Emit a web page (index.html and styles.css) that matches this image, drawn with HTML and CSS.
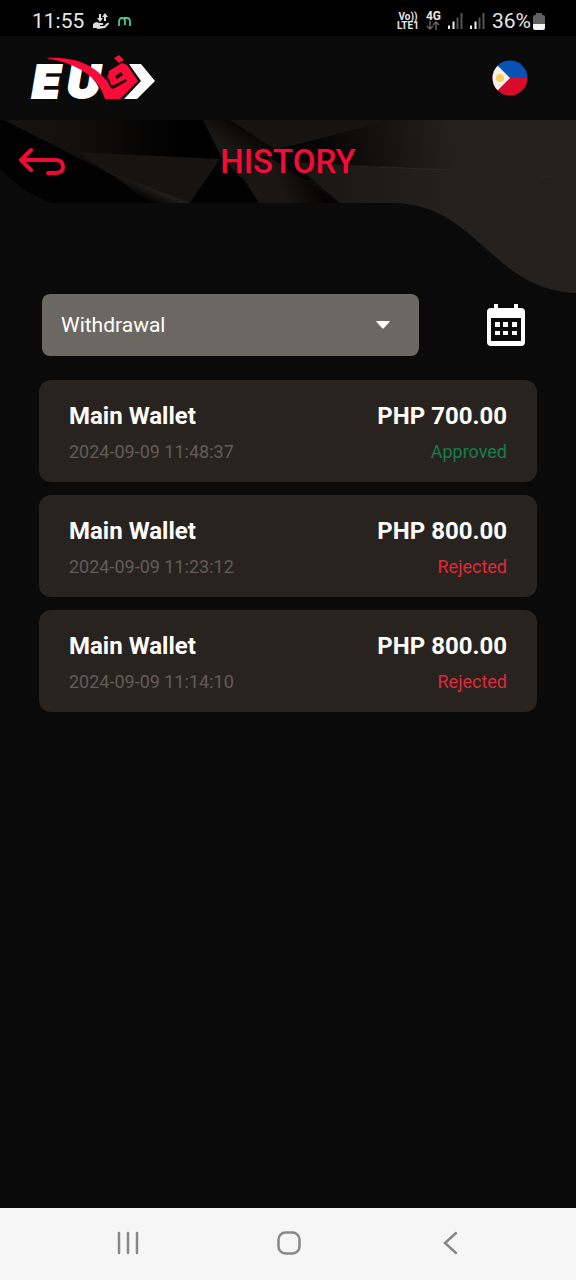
FILE: index.html
```html
<!DOCTYPE html>
<html lang="en">
<head>
<meta charset="utf-8">
<meta name="viewport" content="width=device-width, initial-scale=1">
<title>History</title>
<link rel="stylesheet" href="styles.css">
</head>
<body>
<div class="status">
  <div class="status-group">
    <span class="clock">11:55</span>
    <svg width="16" height="16" viewBox="0 0 16 16" aria-hidden="true">
      <path d="M0 11l3-2 4 1h2q2 0 1 2H7v1h4l3-3q2-1 2 1l-4 4-7 1-2-1H0z" fill="#ddd"/>
      <path d="M7 1v5M12 8V3" stroke="#ddd" stroke-width="2"/><path d="M4 5h6L7 9zM9 4h6l-3-4z" fill="#ddd"/>
    </svg>
    <svg width="13" height="9" viewBox="0 0 13 9" aria-hidden="true">
      <path d="M1 9V5q0-4 3-4t3 3v4M6 1h3q3 0 3 4v4" fill="none" stroke="#3fce91" stroke-width="1.800"/>
    </svg>
  </div>
  <div class="status-group status-right">
    <span class="volte"><span>Vo))</span><span>LTE1</span></span>
    <span class="network"><span>4G</span>
      <svg width="14" height="9" viewBox="0 0 14 9" aria-hidden="true"><path d="M4 0v8M1 5l3 3 3-3M10 9V1M7 4l3-3 3 3" fill="none" stroke="#666" stroke-width="1.400"/></svg>
    </span>
    <svg width="15" height="16" viewBox="0 0 15 16" aria-hidden="true"><path d="M1 12.500V16M5.500 8.500V16" stroke="#eee" stroke-width="2"/><path d="M9.500 4.500V16M13.500 0V16" stroke="#555" stroke-width="2"/></svg>
    <svg width="15" height="16" viewBox="0 0 15 16" aria-hidden="true"><path d="M1 12.500V16M5.500 8.500V16" stroke="#eee" stroke-width="2"/><path d="M9.500 4.500V16M13.500 0V16" stroke="#555" stroke-width="2"/></svg>
    <span class="battery">36%
      <svg width="12" height="17" viewBox="0 0 12 17" aria-hidden="true"><path d="M3 2V0h6v2h1q2 0 2 2v7H0V4q0-2 2-2z" fill="#606060"/><path d="M0 11h12v4q0 2-2 2H2q-2 0-2-2z" fill="#f4f4f4"/></svg>
    </span>
  </div>
</div>

<header class="header">
  <a class="brand" href="#" aria-label="EU home">
    <svg class="brand-logo" width="126" height="48" viewBox="0 0 126 48">
      <text class="brand-text" x="1" y="44">E</text>
      <text class="brand-text" x="36" y="44">U</text>
      <path d="M98 10h12l14 17-18 18H93l17-18z" fill="#fff"/>
      <path d="M43 9C58 16 69 28 73 45" fill="none" stroke="#0a0a0a" stroke-width="2"/>
      <path d="M15 4C42 2 66 10 80 33L89 45H74C69 27 53 11 15 4z" fill="#fb0b37"/>
      <path d="M77 22L78 17 91 9 96 11 107 27 89 45H75L73 34z" fill="#fb0b37"/>
      <path d="M84 22l6-4 2 3-6 4zM76 26l3 7q2 3 5 1l12-7-1-2-12 6q-2 1-3-1l-3-7z" fill="#16080c"/>
      <path d="M83 4l5-3 5 5-5 3z" fill="#fb0b37"/>
    </svg>
  </a>
  <button class="icon-button" type="button" aria-label="Country: Philippines">
    <svg width="36" height="36" viewBox="0 0 36 36">
      <defs><clipPath id="flag-round"><circle cx="18" cy="18" r="17.500"/></clipPath></defs>
      <g clip-path="url(#flag-round)"><path d="M0 0h36v18H0z" fill="#0752b5"/><path d="M0 18h36v18H0z" fill="#d80b2b"/><path d="M0 0L18 18 0 36z" fill="#f5f1e8"/><circle cx="8" cy="18" r="4" fill="#f4cf5b"/></g>
    </svg>
  </button>
</header>

<main class="main">
  <svg class="backdrop" viewBox="0 0 576 173" preserveAspectRatio="none" aria-hidden="true">
    <defs>
      <linearGradient id="facet-left" gradientUnits="userSpaceOnUse" x1="0" y1="0" x2="200" y2="0"><stop offset="0" stop-color="#151210"/><stop offset=".35" stop-color="#14100e"/><stop offset=".78" stop-color="#030303"/><stop offset="1" stop-color="#000"/></linearGradient>
      <linearGradient id="facet-right" gradientUnits="userSpaceOnUse" x1="310" y1="30" x2="450" y2="10"><stop offset="0" stop-color="#040404"/><stop offset=".5" stop-color="#14110f"/><stop offset="1" stop-color="#24201d"/></linearGradient>
      <linearGradient id="facet-fold" gradientUnits="userSpaceOnUse" x1="320" y1="68" x2="285" y2="82"><stop offset="0" stop-color="#050404"/><stop offset="1" stop-color="#1b1613"/></linearGradient>
      <linearGradient id="wave" gradientUnits="userSpaceOnUse" x1="300" y1="0" x2="450" y2="0"><stop offset="0" stop-color="#1a1613"/><stop offset="1" stop-color="#24201d"/></linearGradient>
      <linearGradient id="facet-shade" gradientUnits="userSpaceOnUse" x1="252" y1="14" x2="238" y2="34"><stop offset="0" stop-color="#080706"/><stop offset="1" stop-color="#1a1613"/></linearGradient>
      <linearGradient id="facet-glint" gradientUnits="userSpaceOnUse" x1="152" y1="67" x2="146" y2="80"><stop offset="0" stop-color="#25211d"/><stop offset="1" stop-color="#020202"/></linearGradient>
    </defs>
    <path d="M0 0h300v83H52Q18 70 0 48z" fill="#020202"/>
    <path d="M4 0h199l17 39-112 14z" fill="url(#facet-left)"/>
    <path d="M78 32l142 7-30 44-82-30z" fill="#171310"/>
    <path d="M108 52L190 83H150z" fill="url(#facet-glint)"/>
    <path d="M203 0h30l42 29-34 29-19-20z" fill="url(#facet-shade)"/>
    <path d="M230 0h162l-116 30z" fill="#171310"/>
    <path d="M392 0h184v60H300l-24-30z" fill="url(#facet-right)"/>
    <path d="M241 55l30-17 69 45h-81z" fill="url(#facet-fold)"/>
    <path d="M292 42L450 50H576V173C491 170 477 83 392 83H340z" fill="url(#wave)"/>
    <path d="M380 47L450 50M538 57h15" stroke="#2c2723" fill="none"/>
  </svg>
  <div class="titlebar">
    <button class="icon-button" type="button" aria-label="Back">
      <svg width="46" height="30" viewBox="0 0 46 30"><path d="M12 3L2 13l10 10M3 13h33q8 0 8 7 0 6-8 6h-7" fill="none" stroke="#f00b35" stroke-width="4" stroke-linecap="round" stroke-linejoin="round"/></svg>
    </button>
    <h1 class="title">HISTORY</h1>
  </div>
  <div class="filters">
    <div class="select-wrap">
      <select class="select" aria-label="Transaction type"><option>Withdrawal</option></select>
      <svg class="select-arrow" width="14" height="8" viewBox="0 0 14 8" aria-hidden="true"><path d="M1 0h12q1 0 .5 1L8 7Q7 8 6 7L.500 1Q0 0 1 0z" fill="#fff"/></svg>
    </div>
    <button class="icon-button" type="button" aria-label="Choose date">
      <svg width="38" height="42" viewBox="0 0 38 42"><path d="M7 0h4v4h16V0h4v4h3q4 0 4 4v30q0 4-4 4H4q-4 0-4-4V8q0-4 4-4h3zM4 14v23h30V14z" fill="#fff" fill-rule="evenodd"/><path d="M8 18h5v5H8zm8 0h5v5h-5zm9 0h5v5h-5zM8 27h5v4H8zm8 0h5v4h-5zm9 0h5v4h-5z" fill="#fff"/></svg>
    </button>
  </div>
  <ul class="records">
    <li class="card">
      <div class="row primary"><span>Main Wallet</span><span>PHP 700.00</span></div>
      <div class="row secondary"><time datetime="2024-09-09T11:48:37">2024-09-09 11:48:37</time><span class="approved">Approved</span></div>
    </li>
    <li class="card">
      <div class="row primary"><span>Main Wallet</span><span>PHP 800.00</span></div>
      <div class="row secondary"><time datetime="2024-09-09T11:23:12">2024-09-09 11:23:12</time><span class="rejected">Rejected</span></div>
    </li>
    <li class="card">
      <div class="row primary"><span>Main Wallet</span><span>PHP 800.00</span></div>
      <div class="row secondary"><time datetime="2024-09-09T11:14:10">2024-09-09 11:14:10</time><span class="rejected">Rejected</span></div>
    </li>
  </ul>
</main>

<nav class="system-nav" aria-label="System navigation">
  <button class="icon-button" type="button" aria-label="Recent apps"><svg width="24" height="24" viewBox="0 0 24 24"><path d="M3 2v20M12 2v20M21 2v20" stroke="#888" stroke-width="2.500" stroke-linecap="round"/></svg></button>
  <button class="icon-button" type="button" aria-label="Home"><svg width="24" height="24" viewBox="0 0 24 24"><rect x="1.500" y="1.500" width="21" height="21" rx="7" fill="none" stroke="#888" stroke-width="2.500"/></svg></button>
  <button class="icon-button" type="button" aria-label="Go back"><svg width="24" height="24" viewBox="0 0 24 24"><path d="M18 2L7 12l11 10" fill="none" stroke="#888" stroke-width="2.500" stroke-linecap="round"/></svg></button>
</nav>
</body>
</html>
```
FILE: styles.css
```css
* { box-sizing: border-box; }
body {
  margin: 0;
  min-height: 100vh;
  display: flex;
  flex-direction: column;
  background: #0a0a0a;
  color: #fff;
  font-family: Roboto, "Liberation Sans", sans-serif;
}
svg { display: block; }
.icon-button {
  display: flex;
  padding: 0;
  border: 0;
  background: none;
  cursor: pointer;
}
.status {
  display: flex;
  justify-content: space-between;
  align-items: center;
  height: 36px;
  padding: 6px 31px 0 32px;
  background: #000;
  color: #e6e6e6;
}
.status-group { display: flex; align-items: center; gap: 9px; }
.status-right { gap: 7px; }
.clock, .battery { font-size: 21px; line-height: 24px; }
.battery { display: flex; align-items: center; gap: 2px; }
.volte, .network {
  display: flex;
  flex-direction: column;
  align-items: center;
  font-size: 10px;
  font-weight: 700;
  line-height: 9px;
}
.network { font-size: 12px; }
.header {
  display: flex;
  justify-content: space-between;
  align-items: center;
  height: 84px;
  padding: 0 48px 0 31px;
}
.brand-logo { overflow: visible; }
.brand-text {
  font-family: Inter, sans-serif;
  font-size: 46px;
  font-weight: 900;
  font-style: italic;
  fill: #fff;
  stroke: #fff;
  stroke-width: 2px;
}
.main { position: relative; flex: 1; }
.backdrop {
  position: absolute;
  top: 0;
  left: 0;
  width: 100%;
  height: 173px;
}
.titlebar {
  position: relative;
  display: grid;
  grid-template-columns: 46px 1fr 46px;
  align-items: center;
  height: 84px;
  padding: 0 19px;
}
.title {
  margin: 0;
  text-align: center;
  color: #f50b37;
  font-size: 33px;
  font-weight: 500;
  line-height: 40px;
}
.filters {
  position: relative;
  display: flex;
  justify-content: space-between;
  align-items: center;
  margin-top: 90px;
  padding: 0 51px 0 42px;
}
.select-wrap { position: relative; flex: 0 1 377px; }
.select {
  appearance: none;
  display: block;
  width: 100%;
  height: 62px;
  padding: 0 48px 0 19px;
  border: 0;
  border-radius: 8px;
  background: #6b6761;
  color: #fff;
  font: 400 21px/28px Roboto, sans-serif;
}
.select-arrow {
  position: absolute;
  top: 27px;
  right: 29px;
  pointer-events: none;
}
.records {
  display: grid;
  gap: 13px;
  margin: 0;
  padding: 24px 39px;
  list-style: none;
}
.card {
  padding: 20px 30px 16px;
  border-radius: 12px;
  background: #292320;
}
.row { display: flex; justify-content: space-between; }
.primary { font-size: 24px; font-weight: 700; line-height: 32px; }
.secondary { padding-top: 6px; font-size: 18px; line-height: 28px; color: #605c59; }
.approved { color: #147e4a; }
.rejected { color: #df2938; }
.system-nav {
  display: grid;
  grid-template-columns: repeat(3, 1fr);
  justify-items: center;
  align-items: center;
  height: 72px;
  padding: 0 45px 2px 47px;
  background: #f6f6f6;
}
```
